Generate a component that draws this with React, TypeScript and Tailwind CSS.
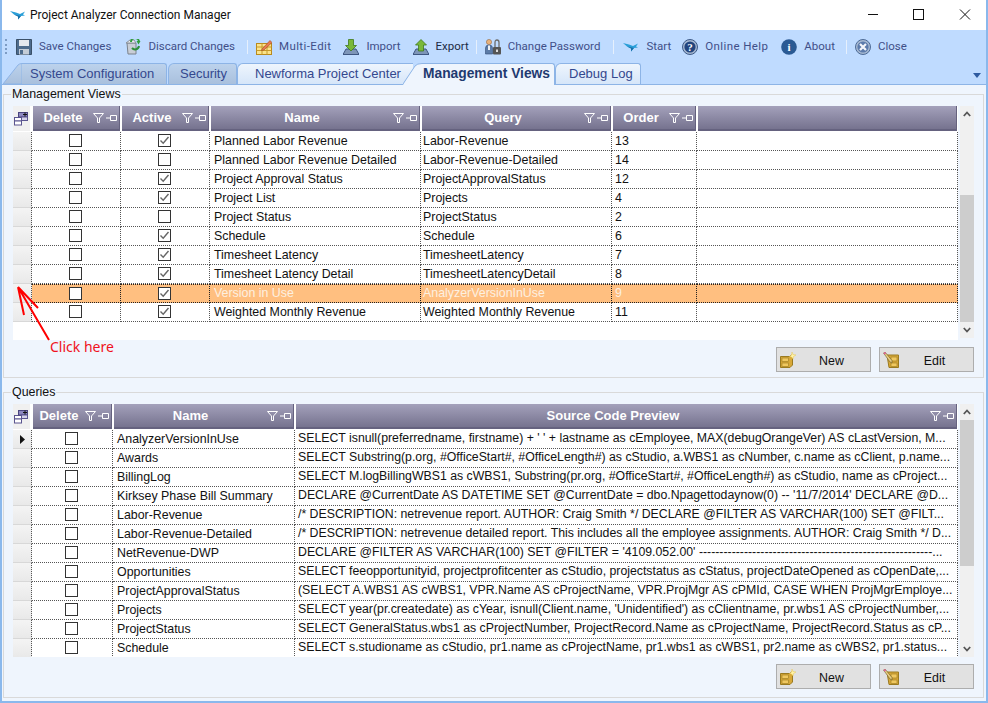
import React from 'react';

const FONT_UI = "font-['Liberation_Sans',Arial,sans-serif]";

const Bird = ({ className = 'w-4 h-[10px]' }: { className?: string }) => (
  <svg viewBox="0 0 16 10" className={className}>
    <path d="M0 1 L6 2.5 L10 4 L15 1.5 L13 4.5 L15 5.5 L11 6 L8 9.5 L8 6.5 L4 4.5 Z" fill="#2a9fd8" />
    <path d="M4 4.5 L8 6.5 L8 9.5 L11 6" fill="#1a6fa8" />
  </svg>
);

const SaveIcon = () => (
  <svg viewBox="0 0 16 16" className="w-4 h-4">
    <path d="M0.5 0.5 H15.5 V15.5 H0.5 Z" fill="#4d6b8c" stroke="#3a5068" />
    <rect x="3" y="1" width="10" height="6" fill="#e4e8ee" />
    <rect x="3" y="10" width="10" height="5.5" fill="#c4ccd6" />
    <rect x="4" y="11" width="3" height="4" fill="#4d6b8c" />
  </svg>
);

const DiscardIcon = () => (
  <svg viewBox="0 0 16 16" className="w-4 h-4">
    <path d="M2 4 H11 V15 H3 Z" fill="#c9ced6" stroke="#7b828c" />
    <path d="M1 4 L5 1 H9 L11 4 Z" fill="#eceff3" stroke="#8a9099" />
    <path d="M6 3 A4 4 0 0 1 14 3" fill="none" stroke="#2f9e3a" strokeWidth="2" />
    <path d="M15.5 2 L13.5 5.5 L11.5 2 Z" fill="#2f9e3a" />
    <path d="M14 7 A4 4 0 0 1 7 9" fill="none" stroke="#2f8f3a" strokeWidth="2" />
  </svg>
);

const MultiEditIcon = () => (
  <svg viewBox="0 0 16 16" className="w-4 h-4">
    <rect x="0.5" y="4.5" width="15" height="11" fill="#fbe38a" stroke="#b98a1d" />
    <path d="M0.5 8 H15.5 M0.5 11.5 H15.5 M6 4.5 V15.5 M11 4.5 V15.5" stroke="#c79a2a" />
    <path d="M6 10 L14 1.5 L16 3.5 L8 11 L5.5 11.5 Z" fill="#e87a50" stroke="#9c4a24" strokeWidth="0.6" />
  </svg>
);

const TrayArrow = ({ up }: { up?: boolean }) => (
  <svg viewBox="0 0 16 16" className="w-4 h-4">
    <path d="M3 10 H13 L16 15.5 H0 Z" fill="#7d95b8" stroke="#3e5680" />
    <path
      d={up ? 'M8 0.5 L13.5 6 H10.5 V12 H5.5 V6 H2.5 Z' : 'M5.5 0.5 H10.5 V6.5 H13.5 L8 12 L2.5 6.5 H5.5 Z'}
      fill="#79b83a"
      stroke="#3f7a1c"
      strokeWidth="0.8"
    />
  </svg>
);

const PasswordIcon = () => (
  <svg viewBox="0 0 16 16" className="w-4 h-4">
    <circle cx="4" cy="3" r="2.6" fill="#e8b27c" stroke="#8a5a30" strokeWidth="0.5" />
    <path d="M0.5 15 V9 Q0.5 6 4 6 Q7.5 6 7.5 9 V15 Z" fill="#5c7ca8" stroke="#324c74" strokeWidth="0.6" />
    <path d="M3 6.5 H5 V11 H3 Z" fill="#eef1f6" />
    <path d="M10 8 V3.5 Q10 1 12 1 Q14 1 14 3.5 V8" fill="none" stroke="#6c6c6c" strokeWidth="1.3" />
    <rect x="8" y="8" width="8" height="7.5" rx="1" fill="#555" />
    <rect x="11" y="10.5" width="2" height="2.5" fill="#ddd" />
  </svg>
);

const Round = ({ glyph, fill, ring }: { glyph: string; fill: string; ring?: boolean }) => (
  <svg viewBox="0 0 16 16" className="w-4 h-4">
    {ring && <circle cx="8" cy="8" r="7.5" fill="#a8bad2" stroke="#3d5a88" />}
    <circle cx="8" cy="8" r={ring ? 5.6 : 7.8} fill={fill} />
    <text x="8" y="12" textAnchor="middle" fontSize="11" fontWeight="700" fontFamily="Liberation Serif" fill="#fff">
      {glyph}
    </text>
  </svg>
);

const CloseIcon = () => (
  <svg viewBox="0 0 16 16" className="w-4 h-4">
    <circle cx="8" cy="8" r="7.5" fill="#a8bad2" stroke="#4c6a96" />
    <circle cx="8" cy="8" r="5.6" fill="#5c7bab" />
    <path d="M5 5 L11 11 M11 5 L5 11" stroke="#f4f6fa" strokeWidth="2.2" />
  </svg>
);

const FilterPin = () => (
  <svg viewBox="0 0 24 10" className="w-6 h-[10px] shrink-0">
    <path d="M0.5 0.5 H10.5 L6.5 5 V9.5 H4.5 V5 Z" fill="none" stroke="#fff" />
    <path d="M13 5 H17 M17.5 2.5 H23.5 V7.5 H17.5 Z" fill="none" stroke="#fff" />
  </svg>
);

const ExpandIcon = () => (
  <svg viewBox="0 0 15 14" className="w-[15px] h-[14px]">
    <rect x="0.5" y="5.5" width="7" height="3.5" fill="#fff" stroke="#5a5590" />
    <rect x="0.5" y="9" width="7" height="4" fill="#fff" stroke="#5a5590" />
    <rect x="4.5" y="0.5" width="9" height="4.5" fill="#8d88c0" stroke="#4a4580" />
    <rect x="7.5" y="5" width="6" height="3.5" fill="#d4d2ea" stroke="#5a5590" />
    <path d="M9 2.5 H13 M11 0.5 V4.5" stroke="#111" />
  </svg>
);

const NewIcon = () => (
  <svg viewBox="0 0 16 16" className="w-4 h-4">
    <path d="M0.5 4.5 H9.5 L12.5 2.5 V13 L10 15.5 H0.5 Z" fill="#d8a838" stroke="#9a7a20" />
    <rect x="2" y="6" width="6.5" height="3.5" fill="#f0c860" stroke="#9a7a20" strokeWidth="0.6" />
    <rect x="2" y="11" width="6.5" height="3.5" fill="#f0c860" stroke="#9a7a20" strokeWidth="0.6" />
    <path d="M12 0 L13 2.5 L16 3 L13.5 4.5 L13 7 L11.5 5 L9.5 4.5 L11.5 3 Z" fill="#fff3a8" stroke="#e6c040" strokeWidth="0.4" />
  </svg>
);

const EditIcon = () => (
  <svg viewBox="0 0 16 16" className="w-4 h-4">
    <path d="M4 3 H15.5 V15.5 H6 Z" fill="#d8a838" stroke="#9a7a20" />
    <rect x="8" y="5" width="6" height="4" fill="#f0c860" stroke="#9a7a20" strokeWidth="0.6" />
    <rect x="8" y="11" width="6" height="3.5" fill="#f0c860" stroke="#9a7a20" strokeWidth="0.6" />
    <path d="M0.5 1 L2 0 L9 8.5 L9 11 L7 10 Z" fill="#e8cc80" stroke="#6a5a2a" strokeWidth="0.6" />
    <path d="M0.5 1 L2 0 L3.2 1.5 L1.7 2.6 Z" fill="#e0609a" />
  </svg>
);

const Checkbox = ({ checked }: { checked?: boolean }) => (
  <div className="w-[13px] h-[13px] border border-[#333] bg-white flex items-center justify-center">
    {checked && (
      <svg viewBox="0 0 11 11" className="w-[11px] h-[11px]">
        <path d="M1.5 5.5 L4.2 8.2 L9.5 2" fill="none" stroke="#666" strokeWidth="1.4" />
      </svg>
    )}
  </div>
);

function ToolItem({ icon, label, className, dark, wide }: { icon: React.ReactNode; label: string; className: string; dark?: boolean; wide?: boolean }) {
  return (
    <div className={`flex items-center gap-[7px] ${className}`}>
      {icon}
      <span className={`text-[11.5px] font-['Roboto',sans-serif] ${wide ? 'tracking-[0.4px]' : ''} ${dark ? 'text-[#1c2a44]' : 'text-[#3f4f88]'}`}>{label}</span>
    </div>
  );
}

const Sep = ({ className }: { className: string }) => <div className={`w-px h-[14px] bg-[#e6f0fd] ${className}`} />;

function Toolbar() {
  return (
    <div className="h-[33px] bg-[#bfdbff] flex items-center pl-[3px]">
      <div className="w-[2px] h-[15px] border-l-2 border-dotted border-[#7d9cc4]" />
      <ToolItem icon={<SaveIcon />} label="Save Changes" className="ml-[9px]" />
      <ToolItem icon={<DiscardIcon />} label="Discard Changes" className="ml-[14px]" />
      <Sep className="ml-[12px]" />
      <ToolItem icon={<MultiEditIcon />} label="Multi-Edit" className="ml-[8px]" wide />
      <ToolItem icon={<TrayArrow />} label="Import" className="ml-[12px]" />
      <ToolItem icon={<TrayArrow up />} label="Export" className="ml-[12px]" dark />
      <Sep className="ml-[7px]" />
      <ToolItem icon={<PasswordIcon />} label="Change Password" className="ml-[8px]" />
      <Sep className="ml-[13px]" />
      <ToolItem icon={<Bird />} label="Start" className="ml-[9px]" />
      <ToolItem icon={<Round glyph="?" fill="#23457e" ring />} label="Online Help" className="ml-[11px]" wide />
      <ToolItem icon={<Round glyph="i" fill="#2a5a94" />} label="About" className="ml-[13px]" />
      <Sep className="ml-[11px]" />
      <ToolItem icon={<CloseIcon />} label="Close" className="ml-[8px]" />
    </div>
  );
}

function Tabs() {
  return (
    <div className={`h-[22px] bg-[#bfdbff] border-b border-[#8db4e6] flex items-end pl-[1px] pr-[5px] ${FONT_UI}`}>
      {/* System Configuration */}
      <svg viewBox="0 0 19 21" className="w-[19px] h-[21px] shrink-0">
        <defs>
          <linearGradient id="tabDim" x1="0" y1="0" x2="0" y2="1">
            <stop offset="0" stopColor="#bcd2ec" />
            <stop offset="1" stopColor="#a9c0dd" />
          </linearGradient>
        </defs>
        <path d="M0 21 L15 2 Q16.5 0.5 19 0.5 V21 Z" fill="url(#tabDim)" stroke="#8db4e6" />
      </svg>
      <div className="w-[145px] h-[21px] bg-gradient-to-b from-[#bcd2ec] to-[#a9c0dd] border-t border-r border-[#8db4e6] rounded-tr-[3px] pl-[8px] text-[13px] leading-[20px] text-[#34488e]">
        System Configuration
      </div>
      {/* Security */}
      <div className="w-[69px] ml-px h-[21px] bg-gradient-to-b from-[#bcd2ec] to-[#a9c0dd] border-t border-l border-r border-[#8db4e6] rounded-tl-[6px] rounded-tr-[3px] pl-[11px] text-[13px] leading-[20px] text-[#34488e]">
        Security
      </div>
      {/* Newforma Project Center */}
      <div className="w-[176px] h-[21px] bg-gradient-to-b from-[#eef5fd] to-[#d6e6f9] border-t border-l border-[#8db4e6] rounded-tl-[6px] pl-[17px] text-[13px] leading-[20px] text-[#34488e]">
        Newforma Project Center
      </div>
      {/* Management Views, drawn over the end of the previous tab */}
      <svg viewBox="0 0 19 22" className="w-[19px] h-[22px] shrink-0 -ml-[10px] -mb-px relative">
        <path d="M0 22 L12 3 Q14 0.5 19 0.5 V22 Z" fill="#eff5fd" />
        <path d="M0 21 L12 3 Q14 0.5 19 0.5" fill="none" stroke="#8db4e6" />
      </svg>
      <div className="w-[133px] h-[22px] -mb-px bg-[#eff5fd] border-t border-r border-[#8db4e6] rounded-tr-[3px] pl-[1px] text-[13.8px] leading-[20px] font-bold text-[#1f3a70]">
        Management Views
      </div>
      {/* Debug Log */}
      <div className="w-[86px] h-[21px] bg-gradient-to-b from-[#eef5fd] to-[#d6e6f9] border-t border-r border-l border-[#8db4e6] rounded-tl-[6px] rounded-tr-[3px] pl-[13px] text-[13px] leading-[20px] text-[#34488e]">
        Debug Log
      </div>
      <svg viewBox="0 0 8 5" className="w-2 h-[5px] ml-auto mb-[6px]">
        <path d="M0 0 H8 L4 5 Z" fill="#2d5aa0" />
      </svg>
    </div>
  );
}

type Col = { label: string; width: string; filter?: boolean };

function HeaderRow({ cols }: { cols: Col[] }) {
  return (
    <div className="flex h-[26px]">
      <div className="w-[19px] h-[25px] pr-px shrink-0 bg-[#f0f0f0] flex items-center justify-center border-r-2 border-white">
        <ExpandIcon />
      </div>
      {cols.map((c, i) => (
        <div key={i} className={`${c.width} shrink-0 h-[25px] pl-px pr-px`}>
          <div className="h-full flex items-center bg-gradient-to-b from-[#a4a1bb] to-[#76738f] border-b-2 border-r border-[#65627f] pr-[2px]">
            <span className="flex-1 text-center text-white font-bold text-[13px]">{c.label}</span>
            {c.filter !== false && <FilterPin />}
          </div>
        </div>
      ))}
    </div>
  );
}

function ScrollBar({ className, thumb }: { className: string; thumb: string }) {
  return (
    <div className={`w-[14px] ml-[2px] bg-[#f0f0f0] flex flex-col shrink-0 ${className}`}>
      <div className="h-[16px] flex items-center justify-center shrink-0">
        <svg viewBox="0 0 8 6" className="w-2 h-[6px]">
          <path d="M0.8 5 L4 1.5 L7.2 5" fill="none" stroke="#555" strokeWidth="1.8" />
        </svg>
      </div>
      <div className="flex-1 flex flex-col">
        <div className={thumb} />
      </div>
      <div className="h-[16px] flex items-center justify-center shrink-0">
        <svg viewBox="0 0 8 6" className="w-2 h-[6px]">
          <path d="M0.8 1 L4 4.5 L7.2 1" fill="none" stroke="#555" strokeWidth="1.8" />
        </svg>
      </div>
    </div>
  );
}

const RowHead = ({ marker }: { marker?: boolean }) => (
  <div className="w-[19px] shrink-0 h-[19px] bg-gradient-to-b from-[#f4f4f4] to-[#e9e9e9] border-b border-[#d8d8d8] border-r border-r-[#555] [border-right-style:dotted] flex items-center justify-center">
    {marker && (
      <svg viewBox="0 0 5 9" className="w-[5px] h-[9px]">
        <path d="M0 0 L5 4.5 L0 9 Z" fill="#111" />
      </svg>
    )}
  </div>
);

const Cell = ({ className, children, dark }: { className: string; children?: React.ReactNode; dark?: boolean }) => (
  <div className={`${className} shrink-0 h-full border-r border-b border-dotted ${dark ? 'border-t border-[#222]' : 'border-[#555]'} flex items-center overflow-hidden whitespace-nowrap`}>
    {children}
  </div>
);

const viewRows: { active: boolean; name: string; query: string; order: number; selected?: boolean }[] = [
  { active: true, name: 'Planned Labor Revenue', query: 'Labor-Revenue', order: 13 },
  { active: false, name: 'Planned Labor Revenue Detailed', query: 'Labor-Revenue-Detailed', order: 14 },
  { active: true, name: 'Project Approval Status', query: 'ProjectApprovalStatus', order: 12 },
  { active: true, name: 'Project List', query: 'Projects', order: 4 },
  { active: false, name: 'Project Status', query: 'ProjectStatus', order: 2 },
  { active: true, name: 'Schedule', query: 'Schedule', order: 6 },
  { active: true, name: 'Timesheet Latency', query: 'TimesheetLatency', order: 7 },
  { active: true, name: 'Timesheet Latency Detail', query: 'TimesheetLatencyDetail', order: 8 },
  { active: true, name: 'Version in Use', query: 'AnalyzerVersionInUse', order: 9, selected: true },
  { active: true, name: 'Weighted Monthly Revenue', query: 'Weighted Monthly Revenue', order: 11 },
];

const queryRows: [string, string][] = [
  ['AnalyzerVersionInUse', "SELECT isnull(preferredname, firstname) + ' ' + lastname as cEmployee, MAX(debugOrangeVer) AS cLastVersion, M..."],
  ['Awards', 'SELECT Substring(p.org, #OfficeStart#, #OfficeLength#) as cStudio, a.WBS1 as cNumber, c.name as cClient, p.name...'],
  ['BillingLog', 'SELECT M.logBillingWBS1 as cWBS1, Substring(pr.org, #OfficeStart#, #OfficeLength#) as cStudio, name as cProject...'],
  ['Kirksey Phase Bill Summary', "DECLARE @CurrentDate AS DATETIME SET @CurrentDate = dbo.Npagettodaynow(0) -- '11/7/2014' DECLARE @D..."],
  ['Labor-Revenue', '/* DESCRIPTION: netrevenue report. AUTHOR: Craig Smith */ DECLARE @FILTER AS VARCHAR(100) SET @FILT...'],
  ['Labor-Revenue-Detailed', '/* DESCRIPTION: netrevenue detailed report. This includes all the employee assignments. AUTHOR: Craig Smith */ D...'],
  ['NetRevenue-DWP', "DECLARE @FILTER AS VARCHAR(100) SET @FILTER = '4109.052.00' ---------------------------------------------------------..."],
  ['Opportunities', 'SELECT feeopportunityid, projectprofitcenter as cStudio, projectstatus as cStatus, projectDateOpened as cOpenDate,...'],
  ['ProjectApprovalStatus', '(SELECT A.WBS1 AS cWBS1, VPR.Name AS cProjectName, VPR.ProjMgr AS cPMId, CASE WHEN ProjMgrEmploye...'],
  ['Projects', "SELECT year(pr.createdate) as cYear, isnull(Client.name, 'Unidentified') as cClientname, pr.wbs1 AS cProjectNumber,..."],
  ['ProjectStatus', 'SELECT GeneralStatus.wbs1 as cProjectNumber, ProjectRecord.Name as cProjectName, ProjectRecord.Status as cP...'],
  ['Schedule', 'SELECT s.studioname as cStudio, pr1.name as cProjectName, pr1.wbs1 as cWBS1, pr2.name as cWBS2, pr1.status...'],
];

function Buttons({ className }: { className: string }) {
  return (
    <div className={`flex justify-end gap-[8px] ${className}`}>
      {[
        { icon: <NewIcon />, label: 'New' },
        { icon: <EditIcon />, label: 'Edit' },
      ].map(b => (
        <div key={b.label} className="w-[95px] h-[25px] bg-[#e1e1e1] border border-[#adadad] flex items-center pl-[3px]">
          {b.icon}
          <span className="flex-1 text-center text-[12.4px] text-[#111] pr-[3px] pt-[3px]">{b.label}</span>
        </div>
      ))}
    </div>
  );
}

function Group({ title, className, children }: { title: string; className: string; children: React.ReactNode }) {
  return (
    <fieldset className={`border border-[#d9d9d9] ml-[1px] w-[981px] pl-[9px] pr-[9px] ${className}`}>
      <legend className="-ml-[2px] px-px text-[12.4px] leading-[14px] text-[#111]">{title}</legend>
      {children}
    </fieldset>
  );
}

export default function App() {
  const viewCols: Col[] = [
    { label: 'Delete', width: 'w-[89px]' },
    { label: 'Active', width: 'w-[89px]' },
    { label: 'Name', width: 'w-[211px]' },
    { label: 'Query', width: 'w-[191px]' },
    { label: 'Order', width: 'w-[85px]' },
    { label: '', width: 'w-[261px]', filter: false },
  ];
  const queryCols: Col[] = [
    { label: 'Delete', width: 'w-[81px]' },
    { label: 'Name', width: 'w-[182px]' },
    { label: 'Source Code Preview', width: 'w-[663px]' },
  ];

  return (
    <div className={`w-[988px] h-[703px] overflow-hidden bg-[#eff5fd] relative border-x-2 border-b-[2px] border-[#8ab8ec] ${FONT_UI}`}>
      {/* title bar */}
      <div className="h-[30px] bg-white -ml-px flex items-center pl-[9px] relative">
        <Bird />
        <span className="ml-[4px] text-[12px] text-[#111] font-['Roboto',sans-serif]">Project Analyzer Connection Manager</span>
        <svg viewBox="0 0 112 12" className="w-[112px] h-[12px] absolute left-[867px] top-[8px]">
          <path d="M0 6.5 H10" stroke="#111" />
          <rect x="45.5" y="1.5" width="10" height="10" fill="none" stroke="#111" />
          <path d="M92 1.5 L102 11.5 M102 1.5 L92 11.5" stroke="#111" />
        </svg>
      </div>
      <Toolbar />
      <Tabs />

      <Group title="Management Views" className="h-[291px] mt-[2px]">
        <div className="flex h-[234px] mt-[5px]">
          <div className="w-[945px] bg-white shrink-0 text-[12.4px] text-[#111]">
            <HeaderRow cols={viewCols} />
            {viewRows.map(r => (
              <div key={r.name} className={`flex h-[19px] ${r.selected ? 'bg-[#ffbf80] text-[#fdf0e0]' : ''}`}>
                <RowHead />
                <Cell dark={r.selected} className="w-[89px] justify-center pr-px pb-px"><Checkbox /></Cell>
                <Cell dark={r.selected} className="w-[89px] justify-center pr-px pb-px"><Checkbox checked={r.active} /></Cell>
                <Cell dark={r.selected} className="w-[211px] pl-[4px]">{r.name}</Cell>
                <Cell dark={r.selected} className="w-[191px] pl-[2px]">{r.query}</Cell>
                <Cell dark={r.selected} className="w-[85px] pl-[3px]">{r.order}</Cell>
                <Cell dark={r.selected} className="w-[261px]" />
              </div>
            ))}
          </div>
          <ScrollBar className="h-[232px]" thumb="h-[127px] mt-[73px] bg-[#cdcdcd]" />
        </div>
        <Buttons className="mt-[7px]" />
      </Group>

      <Group title="Queries" className="h-[313px] mt-[7px]">
        <div className="flex h-[253px] mt-[5px]">
          <div className="w-[945px] bg-white shrink-0 text-[12.4px] text-[#111] overflow-hidden">
            <HeaderRow cols={queryCols} />
            {queryRows.map(([name, sql], i) => (
              <div key={name} className="flex h-[19px]">
                <RowHead marker={i === 0} />
                <Cell className="w-[81px] justify-center pr-[2px] pb-px"><Checkbox /></Cell>
                <Cell className="w-[182px] pl-[4px]">{name}</Cell>
                <Cell className="w-[663px] pl-[3px] pb-[2px] text-[12.3px]">{sql}</Cell>
              </div>
            ))}
          </div>
          <ScrollBar className="h-[253px]" thumb="h-[146px] bg-[#cdcdcd]" />
        </div>
        <Buttons className="mt-[7px]" />
      </Group>

      {/* annotation over the grid */}
      <svg viewBox="0 0 60 60" className="absolute left-[14px] top-[286px] w-[60px] h-[60px]">
        <path d="M2 1 L33 54 M2 1 L8 29 M2 1 L22 22" fill="none" stroke="#f00" strokeWidth="2" />
      </svg>
      <span className="absolute left-[48px] top-[336px] text-[14px] text-[#f01020] font-['Noto_Sans',sans-serif]">Click here</span>
    </div>
  );
}
